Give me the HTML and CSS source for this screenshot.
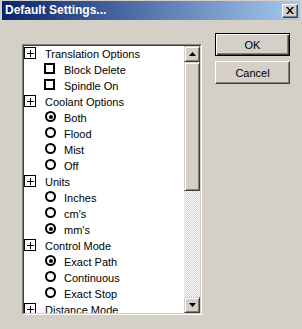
FILE: index.html
```html
<!DOCTYPE html>
<html>
<head>
<meta charset="utf-8">
<link rel="stylesheet" href="styles.css">
</head>
<body>
<div class="window">
  <div class="titlebar">
    <span class="title">Default Settings...</span>
    <span class="close"><svg width="8" height="7" viewBox="0 0 8 7"><path d="M0 0h2l2 2.5L6 0h2L5 3.5 8 7H6L4 4.5 2 7H0l3-3.5z" fill="#000"/></svg></span>
  </div>
  <div class="body">
    <div class="listbox">
      <div class="items">
        <div class="row head"><span class="plus"></span><span class="lbl">Translation Options</span></div>
        <div class="row"><span class="check"></span><span class="lbl">Block Delete</span></div>
        <div class="row"><span class="check"></span><span class="lbl">Spindle On</span></div>
        <div class="row head"><span class="plus"></span><span class="lbl">Coolant Options</span></div>
        <div class="row"><span class="radio on"></span><span class="lbl">Both</span></div>
        <div class="row"><span class="radio"></span><span class="lbl">Flood</span></div>
        <div class="row"><span class="radio"></span><span class="lbl">Mist</span></div>
        <div class="row"><span class="radio"></span><span class="lbl">Off</span></div>
        <div class="row head"><span class="plus"></span><span class="lbl">Units</span></div>
        <div class="row"><span class="radio"></span><span class="lbl">Inches</span></div>
        <div class="row"><span class="radio"></span><span class="lbl">cm's</span></div>
        <div class="row"><span class="radio on"></span><span class="lbl">mm's</span></div>
        <div class="row head"><span class="plus"></span><span class="lbl">Control Mode</span></div>
        <div class="row"><span class="radio on"></span><span class="lbl">Exact Path</span></div>
        <div class="row"><span class="radio"></span><span class="lbl">Continuous</span></div>
        <div class="row"><span class="radio"></span><span class="lbl">Exact Stop</span></div>
        <div class="row head"><span class="plus"></span><span class="lbl">Distance Mode</span></div>
      </div>
      <div class="scrollbar">
        <div class="sb-btn"><svg width="7" height="4" viewBox="0 0 7 4"><path d="M3.5 0L7 4H0z" fill="#000"/></svg></div>
        <div class="thumb"></div>
        <div class="track"></div>
        <div class="sb-btn"><svg width="7" height="4" viewBox="0 0 7 4"><path d="M0 0h7L3.5 4z" fill="#000"/></svg></div>
      </div>
    </div>
    <div class="buttons">
      <div class="btn default"><span class="btn-in">OK</span></div>
      <div class="btn"><span class="btn-in">Cancel</span></div>
    </div>
  </div>
</div>
</body>
</html>
```
FILE: styles.css
```css
html, body {
  margin: 0;
  padding: 0;
  background: #D4D0C8;
}
.window {
  width: 302px;
  height: 329px;
  box-sizing: border-box;
  padding: 1px 2px 0 2px;
  background: #D4D0C8;
  font-family: "Liberation Sans", Arial, sans-serif;
  overflow: hidden;
}
.titlebar {
  height: 19px;
  background: linear-gradient(to right, #0A246A, #A6CAF0);
  display: flex;
  align-items: center;
  justify-content: space-between;
  padding: 0 2px 0 3px;
}
.title {
  color: #fff;
  font-weight: bold;
  font-size: 12px;
  line-height: 19px;
}
.close {
  width: 16px;
  height: 14px;
  box-sizing: border-box;
  background: #D4D0C8;
  border-top: 1px solid #fff;
  border-left: 1px solid #fff;
  border-right: 1px solid #404040;
  border-bottom: 1px solid #404040;
  box-shadow: inset -1px -1px 0 #808080;
  display: flex;
  align-items: center;
  justify-content: center;
}
.body {
  display: flex;
  align-items: flex-start;
  padding: 13px 0 0 20px;
  gap: 13px;
}
.listbox {
  margin-top: 11px;
  width: 180px;
  height: 271px;
  box-sizing: border-box;
  border-top: 1px solid #808080;
  border-left: 1px solid #808080;
  border-right: 1px solid #fff;
  border-bottom: 1px solid #fff;
  display: flex;
  background: #fff;
  position: relative;
}
.listbox::before {
  content: "";
  position: absolute;
  inset: 0;
  border-top: 1px solid #404040;
  border-left: 1px solid #404040;
  border-right: 1px solid #D4D0C8;
  border-bottom: 1px solid #D4D0C8;
  pointer-events: none;
  z-index: 2;
}
.items {
  flex: 1;
  margin: 1px 0 1px 1px;
  overflow: hidden;
  font-size: 11px;
  color: #000;
}
.row {
  height: 16px;
  display: flex;
  align-items: flex-start;
  position: relative;
}
.lbl {
  line-height: 16px;
  margin-left: 40px;
  white-space: nowrap;
}
.head .lbl {
  margin-left: 21px;
}
.plus {
  position: absolute;
  left: 0;
  top: 1px;
  width: 12px;
  height: 12px;
  box-sizing: border-box;
  border: 1px solid #000;
  background:
    linear-gradient(#000, #000) center / 7px 1px no-repeat,
    linear-gradient(#000, #000) center / 1px 7px no-repeat,
    #fff;
  z-index: 3;
}
.check {
  position: absolute;
  left: 20px;
  top: 1px;
  width: 11px;
  height: 11px;
  box-sizing: border-box;
  border: 2px solid #000;
}
.radio {
  position: absolute;
  left: 21px;
  top: 1px;
  width: 11px;
  height: 11px;
  box-sizing: border-box;
  border: 2px solid #000;
  border-radius: 50%;
}
.radio.on::after {
  content: "";
  position: absolute;
  left: 1.5px;
  top: 1.5px;
  width: 4px;
  height: 4px;
  background: #000;
  border-radius: 50%;
}
.scrollbar {
  width: 16px;
  margin: 1px 1px 1px 0;
  display: flex;
  flex-direction: column;
}
.sb-btn, .thumb {
  box-sizing: border-box;
  background: #D4D0C8;
  border-top: 1px solid #D4D0C8;
  border-left: 1px solid #D4D0C8;
  border-right: 1px solid #404040;
  border-bottom: 1px solid #404040;
  box-shadow: inset 1px 1px 0 #fff, inset -1px -1px 0 #808080;
}
.sb-btn {
  height: 16px;
  display: flex;
  align-items: center;
  justify-content: center;
  flex: none;
}
.thumb {
  height: 129px;
  flex: none;
}
.track {
  flex: 1;
  background: repeating-conic-gradient(#fff 0 25%, #D4D0C8 0 50%) 0 0 / 2px 2px;
}
.buttons {
  display: flex;
  flex-direction: column;
  gap: 5px;
}
.btn {
  width: 75px;
  height: 23px;
  box-sizing: border-box;
  border-top: 1px solid #fff;
  border-left: 1px solid #fff;
  border-right: 1px solid #404040;
  border-bottom: 1px solid #404040;
  box-shadow: inset -1px -1px 0 #808080;
  background: #D4D0C8;
  display: flex;
  align-items: center;
  justify-content: center;
  font-size: 11px;
  color: #000;
}
.btn.default {
  border: 1px solid #000;
  box-shadow: inset 1px 1px 0 #fff, inset -1px -1px 0 #404040, inset -2px -2px 0 #808080;
}
```
